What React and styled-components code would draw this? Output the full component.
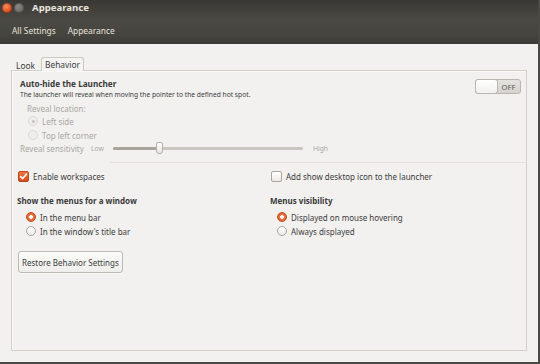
import React from "react";
import styled, { createGlobalStyle } from "styled-components";

const Global = createGlobalStyle`
  html, body { margin: 0; padding: 0; }
  body { background: #f2f1f0; font-family: "Noto Sans", "DejaVu Sans", sans-serif; }
  * { box-sizing: border-box; }
`;

const Window = styled.div`
  width: 540px;
  height: 364px;
  display: flex;
  flex-direction: column;
  background: #f2f1f0;
  border-right: 2px solid #4a4945;
  border-bottom: 2px solid #4a4945;
  overflow: hidden;
`;

const Header = styled.div`
  height: 44px;
  background: linear-gradient(#393834, #4a4944 45%, #45443f 80%, #3c3b37);
  display: flex;
  flex-direction: column;
  color: #dfdbd2;
  flex-shrink: 0;
`;

const TitleRow = styled.div`
  height: 15px;
  display: flex;
  align-items: center;
  padding-left: 2px;
  gap: 2px;
`;

const WinBtn = styled.span`
  width: 10px;
  height: 10px;
  border-radius: 50%;
  background: ${(p) =>
    p.$close
      ? "radial-gradient(circle at 40% 35%, #f58e63, #e0521c 60%, #b8400f)"
      : "radial-gradient(circle at 40% 35%, #8a8984, #5b5a55)"};
  box-shadow: inset 0 0 0 1px rgba(0,0,0,0.25);
`;

const Title = styled.span`
  margin-left: 6px;
  font-size: 9.6px;
  font-weight: bold;
  color: #e8e5de;
`;

const Toolbar = styled.div`
  flex: 1;
  display: flex;
  align-items: center;
  padding-left: 12px;
  padding-top: 1px;
  gap: 12px;
  font-size: 8.4px;
  color: #e6e2da;
`;

const Body = styled.div`
  flex: 1;
  display: flex;
  flex-direction: column;
  padding: 12px 11px 11px 11px;
`;

const Tabs = styled.div`
  height: 14px;
  display: flex;
  align-items: flex-end;
  padding-left: 5px;
  gap: 6px;
  font-size: 8.4px;
  color: #3c3c3c;
`;

const Tab = styled.div`
  height: ${(p) => (p.$active ? "14px" : "12px")};
  display: flex;
  align-items: center;
  padding: 0 ${(p) => (p.$active ? "3px" : "0")};
  border: ${(p) => (p.$active ? "1px solid #cdc8c1" : "none")};
  border-bottom: none;
  border-radius: 3px 3px 0 0;
  background: ${(p) => (p.$active ? "#f5f4f2" : "transparent")};
  margin-bottom: -1px;
  position: relative;
  z-index: 1;
`;

const Panel = styled.div`
  flex: 1;
  border: 1px solid #d3cfc9;
  box-shadow: inset 1px 1px 0 #faf9f8;
  display: flex;
  flex-direction: column;
  color: #3c3c3c;
`;

const TopSection = styled.div`
  display: flex;
  justify-content: space-between;
  padding: 7px 5px 0 8px;
`;

const Heading = styled.div`
  font-size: 8.2px;
  font-weight: bold;
  line-height: 12px;
  color: #3a3a3a;
`;

const Desc = styled.div`
  font-size: 6.7px;
  line-height: 10px;
  color: #3c3c3c;
`;

const Toggle = styled.div`
  margin-top: 1px;
  width: 46px;
  height: 15px;
  border: 1px solid #b9b5af;
  border-radius: 3px;
  background: linear-gradient(#e4e2df, #d6d3cf);
  display: flex;
  position: relative;
`;

const Knob = styled.div`
  width: 23px;
  height: 15px;
  margin: -1px 0 0 -1px;
  border: 1px solid #b9b5af;
  border-radius: 3px;
  background: linear-gradient(#ffffff, #f1f0ee);
`;

const ToggleLabel = styled.span`
  flex: 1;
  display: flex;
  align-items: center;
  justify-content: center;
  font-size: 7.6px;
  color: #5a5955;
  padding-right: 1px;
`;

const SubLabel = styled.div`
  height: 12px;
  display: flex;
  align-items: center;
  padding-left: 15px;
  margin-top: 2px;
  color: #aaa7a2;
  font-size: 8px;
`;

const OptRow = styled.label`
  height: 14px;
  display: flex;
  align-items: center;
  gap: ${(p) => p.$gap || 4}px;
  padding-left: ${(p) => p.$indent || 0}px;
  font-size: 8px;
  color: ${(p) => (p.$disabled ? "#aaa7a2" : "#3c3c3c")};
`;

const Radio = styled.span`
  width: 10px;
  height: 10px;
  border-radius: 50%;
  flex-shrink: 0;
  position: relative;
  border: 1px solid ${(p) => (p.$on ? "#c0501f" : p.$disabled ? "#dcd9d5" : "#a9a5a0")};
  background: ${(p) =>
    p.$on
      ? "radial-gradient(circle, #fff 0 1.6px, #f07746 2.2px, #dd4814 100%)"
      : p.$disabled
      ? "#eeedeb"
      : "linear-gradient(#fff, #ebe9e6)"};
  ${(p) =>
    p.$dot &&
    `&::after { content: ""; position: absolute; left: 2.5px; top: 2.5px; width: 3px; height: 3px; border-radius: 50%; background: #c6c3bf; }`}
`;

const Slider = styled.div`
  height: 13px;
  display: flex;
  align-items: center;
  padding-left: 8px;
`;

const SliderLabel = styled.span`
  font-size: ${(p) => p.$size || 8}px;
  color: #aaa7a2;
  width: ${(p) => p.$w || "auto"};
`;

const Track = styled.div`
  width: 190px;
  height: 3px;
  margin: 0 10px 0 9px;
  border-radius: 2px;
  background: #c9c6c1;
  position: relative;
`;

const Fill = styled.div`
  height: 3px;
  border-radius: 2px;
  background: #a7a39d;
`;

const Thumb = styled.div`
  position: absolute;
  top: -5px;
  width: 7px;
  height: 12px;
  border: 1px solid #b3afa9;
  border-radius: 2px 2px 3px 3px;
  background: linear-gradient(#fdfdfc, #e9e7e4);
`;

const Separator = styled.div`
  height: 1px;
  margin: 7px 0 0 98px;
  background: #e6e3df;
`;

const Columns = styled.div`
  display: grid;
  grid-template-columns: 253px 1fr;
  padding-left: 5px;
`;

const Col = styled.div`
  display: flex;
  flex-direction: column;
`;

const Check = styled.span`
  width: 11px;
  height: 11px;
  border-radius: 2px;
  flex-shrink: 0;
  border: 1px solid ${(p) => (p.$on ? "#b9461a" : "#a9a5a0")};
  background: ${(p) => (p.$on ? "linear-gradient(#f07746, #d9481a)" : "linear-gradient(#fff, #ebe9e6)")};
  display: flex;
  align-items: center;
  justify-content: center;
`;

const SectionHead = styled.div`
  height: 12px;
  display: flex;
  align-items: center;
  font-size: 8px;
  font-weight: bold;
  color: #3a3a3a;
  margin-top: 11px;
  margin-bottom: 4px;
`;

const CheckRow = styled(OptRow)`
  margin-top: 6px;
`;

const Button = styled.button`
  margin: 13px 0 0 6px;
  align-self: flex-start;
  height: 22px;
  padding: 0 3px;
  font-family: inherit;
  font-size: 8px;
  color: #3c3c3c;
  border: 1px solid #bdb9b3;
  border-radius: 3px;
  background: linear-gradient(#fbfbfa, #efeeec);
  box-shadow: 0 1px 0 rgba(255,255,255,0.6);
`;

const CheckMark = () => (
  <svg width="9" height="9" viewBox="0 0 9 9">
    <path d="M1.6 4.6 L3.6 6.6 L7.4 2.2" fill="none" stroke="#fff" strokeWidth="1.6" strokeLinecap="round" strokeLinejoin="round" />
  </svg>
);

export default function App() {
  return (
    <>
      <Global />
      <Window>
        <Header>
          <TitleRow>
            <WinBtn $close />
            <WinBtn />
            <Title>Appearance</Title>
          </TitleRow>
          <Toolbar>
            <span>All Settings</span>
            <span>Appearance</span>
          </Toolbar>
        </Header>
        <Body>
          <Tabs>
            <Tab>Look</Tab>
            <Tab $active>Behavior</Tab>
          </Tabs>
          <Panel>
            <TopSection>
              <div>
                <Heading>Auto-hide the Launcher</Heading>
                <Desc>The launcher will reveal when moving the pointer to the defined hot spot.</Desc>
              </div>
              <Toggle>
                <Knob />
                <ToggleLabel>OFF</ToggleLabel>
              </Toggle>
            </TopSection>
            <SubLabel>Reveal location:</SubLabel>
            <OptRow $indent={16} $disabled>
              <Radio $disabled $dot />
              Left side
            </OptRow>
            <OptRow $indent={16} $disabled>
              <Radio $disabled />
              Top left corner
            </OptRow>
            <Slider>
              <SliderLabel $w="71px">Reveal sensitivity</SliderLabel>
              <SliderLabel $size={6.8}>Low</SliderLabel>
              <Track>
                <Fill style={{ width: "46px" }} />
                <Thumb style={{ left: "43px" }} />
              </Track>
              <SliderLabel $size={6.8}>High</SliderLabel>
            </Slider>
            <Separator />
            <Columns>
              <Col>
                <CheckRow $indent={1}>
                  <Check $on>
                    <CheckMark />
                  </Check>
                  Enable workspaces
                </CheckRow>
                <SectionHead>Show the menus for a window</SectionHead>
                <OptRow $indent={9}>
                  <Radio $on />
                  In the menu bar
                </OptRow>
                <OptRow $indent={9}>
                  <Radio />
                  In the window's title bar
                </OptRow>
              </Col>
              <Col>
                <CheckRow $indent={1}>
                  <Check />
                  Add show desktop icon to the launcher
                </CheckRow>
                <SectionHead>Menus visibility</SectionHead>
                <OptRow $indent={7}>
                  <Radio $on />
                  Displayed on mouse hovering
                </OptRow>
                <OptRow $indent={7}>
                  <Radio />
                  Always displayed
                </OptRow>
              </Col>
            </Columns>
            <Button>Restore Behavior Settings</Button>
          </Panel>
        </Body>
      </Window>
    </>
  );
}
